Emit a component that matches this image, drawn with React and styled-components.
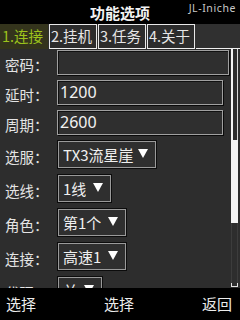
import React from "react";
import styled, { createGlobalStyle } from "styled-components";

const FONT = '"Noto Sans CJK SC", "Noto Sans", sans-serif';

const fields = [
  { label: "密码：", kind: "input", value: "", width: 172 },
  { label: "延时：", kind: "input", value: "1200", width: 166 },
  { label: "周期：", kind: "input", value: "2600", width: 166 },
  { label: "选服：", kind: "select", value: "TX3流星崖", width: 100, clip: 74 },
  { label: "选线：", kind: "select", value: "1线", width: 55 },
  { label: "角色：", kind: "select", value: "第1个", width: 70 },
  { label: "连接：", kind: "select", value: "高速1", width: 70 },
  { label: "代理：", kind: "select", value: "关", width: 46 }
];

const tabs = ["1.连接", "2.挂机", "3.任务", "4.关于"];

const App = () => (
  <Screen>
    <GlobalStyle />
    <TitleBar>
      <span />
      <Title>功能选项</Title>
      <Brand>JL-Iniche</Brand>
    </TitleBar>
    <TabRow>
      {tabs.map((t, i) => (
        <Tab key={t} active={i === 0}>
          {t}
        </Tab>
      ))}
      <TabFill />
    </TabRow>
    <Content>
      <Form>
        {fields.map(f => (
          <Row key={f.label}>
            <Label>{f.label}</Label>
            {f.kind === "input" ? (
              <Input style={{ width: f.width }}>{f.value}</Input>
            ) : (
              <Select style={{ width: f.width }}>
                <SelectText style={f.clip ? { maxWidth: f.clip } : null}>
                  {f.value}
                </SelectText>
                <Arrow />
              </Select>
            )}
          </Row>
        ))}
      </Form>
      <ScrollBar>
        <ThumbTop />
        <ThumbBottom />
        <Track />
        <TrackEnd />
      </ScrollBar>
    </Content>
    <SoftKeys>
      <span>选择</span>
      <span>选择</span>
      <span>返回</span>
    </SoftKeys>
  </Screen>
);

const GlobalStyle = createGlobalStyle`
  html, body {
    margin: 0;
    padding: 0;
    background: #000;
  }
  body {
    font-family: ${FONT};
  }
`;

const Screen = styled.div`
  width: 240px;
  height: 320px;
  display: flex;
  flex-direction: column;
  background: #2d2d2d;
  overflow: hidden;
`;

const TitleBar = styled.div`
  height: 24px;
  background: #000;
  display: grid;
  grid-template-columns: 1fr auto 1fr;
  align-items: start;
`;

const Title = styled.div`
  color: #f2f2f2;
  font-size: 15px;
  font-weight: bold;
  line-height: 25px;
`;

const Brand = styled.div`
  color: #c8c8c8;
  font-family: "Noto Sans", sans-serif;
  font-size: 10.5px;
  line-height: 14px;
  padding-top: 1px;
  padding-right: 4px;
  text-align: right;
  letter-spacing: 0.6px;
`;

const TabRow = styled.div`
  height: 25px;
  display: flex;
  background: #303030;
`;

const Tab = styled.div`
  width: 48px;
  box-sizing: border-box;
  font-size: 14.5px;
  line-height: 22px;
  white-space: nowrap;
  padding-left: 1px;
  color: ${p => (p.active ? "#9cc31c" : "#e6e6e6")};
  background: ${p => (p.active ? "#34341c" : "#2c2c2c")};
  border: 1px solid ${p => (p.active ? "#34341c" : "#e8e8e8")};
  border-bottom-color: ${p => (p.active ? "#34341c" : "#f0f0f0")};
  margin-right: 1px;
`;

const TabFill = styled.div`
  flex: 1;
  border-bottom: 1px solid #f0f0f0;
`;

const Content = styled.div`
  flex: 1;
  display: flex;
  overflow: hidden;
  min-height: 0;
`;

const Form = styled.div`
  flex: 1;
  display: flex;
  flex-direction: column;
  gap: 5px;
  padding-top: 1px;
`;

const Row = styled.div`
  display: flex;
  align-items: center;
  flex-shrink: 0;
`;

const Label = styled.div`
  width: 52px;
  padding-left: 5px;
  padding-top: 4px;
  color: #e4e4e4;
  font-size: 14.5px;
  line-height: 20px;
  white-space: nowrap;
`;

const Input = styled.div`
  height: 25px;
  box-sizing: border-box;
  background: #2f2f2f;
  border: 1px solid #a0a0a0;
  box-shadow: 1px 1px 0 #0a0a0a, inset 1px 1px 0 #111;
  color: #f2f2f2;
  font-family: "Noto Sans", sans-serif;
  font-size: 16px;
  line-height: 22px;
  padding-left: 2px;
`;

const Select = styled.div`
  height: 29px;
  box-sizing: border-box;
  display: flex;
  align-items: center;
  background: #2f2f2f;
  border: 1px solid #0c0c0c;
  box-shadow: inset 0 0 0 1px #9a9a9a;
  padding: 0 8px 0 5px;
  color: #f0f0f0;
  font-size: 15px;
`;

const SelectText = styled.span`
  white-space: nowrap;
  overflow: hidden;
  line-height: 27px;
`;

const Arrow = styled.span`
  margin-left: auto;
  flex-shrink: 0;
  width: 0;
  height: 0;
  border-left: 5px solid transparent;
  border-right: 5px solid transparent;
  border-top: 9px solid #fff;
  margin-top: -3px;
`;

const ScrollBar = styled.div`
  width: 7px;
  margin: 0 2px 0 1px;
  display: flex;
  flex-direction: column;
`;

const ThumbTop = styled.div`
  height: 91px;
  box-sizing: border-box;
  border-left: 2px solid #f4f4f4;
  border-right: 1px solid #d8d8d8;
`;

const ThumbBottom = styled.div`
  height: 83px;
  background: #f4f4f4;
`;

const Track = styled.div`
  flex: 1;
  border-left: 1px solid #3c3c3c;
  border-right: 1px solid #3c3c3c;
`;

const TrackEnd = styled.div`
  height: 3px;
  margin-bottom: 1px;
  border: 1px solid #e0e0e0;
  border-top: none;
`;

const SoftKeys = styled.div`
  height: 32px;
  background: #000;
  display: flex;
  justify-content: space-between;
  align-items: center;
  padding: 0 8px 0 6px;
  color: #ececec;
  font-size: 15px;
  line-height: 32px;
`;

export default App;
